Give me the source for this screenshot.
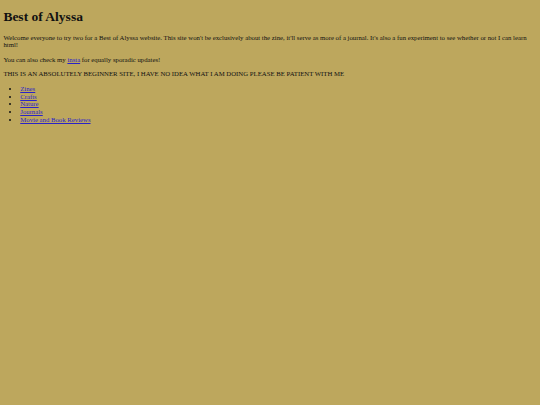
export default function App() {
  const links = ["Zines", "Crafts", "Nature", "Journals", "Movie and Book Reviews"];
  return (
    <div className="flow-root min-h-screen bg-[#bda75d] text-[#111111] font-['Liberation_Serif','Times_New_Roman',serif]">
      <div className="m-[3.375px]">
        <h1 className="text-[13.5px] leading-[15.525px] font-bold my-[9.045px]">Best of Alyssa</h1>
        <p className="text-[6.75px] leading-[7.7625px] my-[6.75px]">
          Welcome everyone to try two for a Best of Alyssa website. This site won't be exclusively about the zine, it'll serve as more of a journal. It's also a fun experiment to see whether or not I can learn html!
        </p>
        <p className="text-[6.75px] leading-[7.7625px] my-[6.75px]">
          You can also check my <a href="#" className="text-[#2a22c8] underline">insta</a> for equally sporadic updates!
        </p>
        <p className="text-[6.75px] leading-[7.7625px] my-[6.75px]">
          THIS IS AN ABSOLUTELY BEGINNER SITE, I HAVE NO IDEA WHAT I AM DOING PLEASE BE PATIENT WITH ME
        </p>
        <ul className="list-disc pl-[16.875px] my-[6.75px] text-[6.75px] leading-[7.7625px]">
          {links.map((l) => (
            <li key={l}>
              <a href="#" className="text-[#2a22c8] underline">{l}</a>
            </li>
          ))}
        </ul>
      </div>
    </div>
  );
}
